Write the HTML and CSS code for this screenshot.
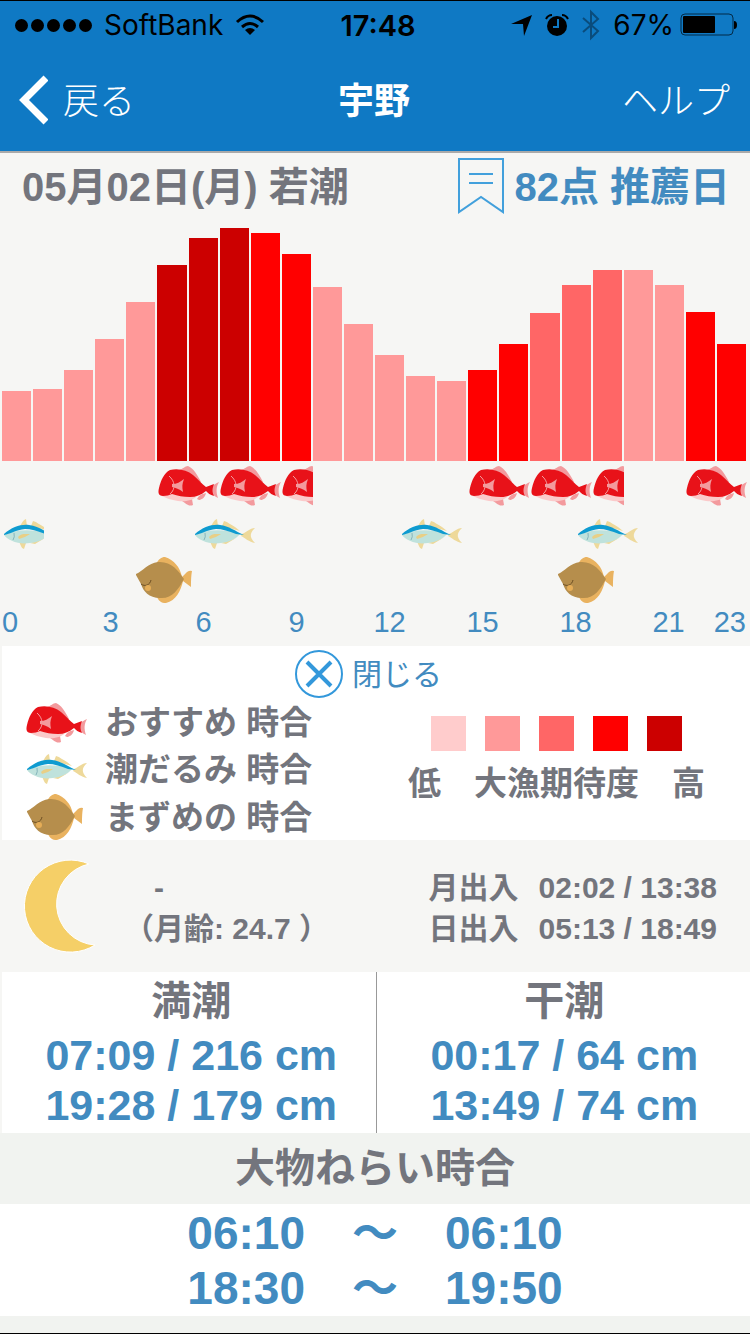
FILE: index.html
```html
<!DOCTYPE html>
<html lang="ja">
<head>
    <meta charset="UTF-8">
    <meta name="viewport" content="width=device-width, initial-scale=1.0">
    <title>宇野</title>
    <link rel="stylesheet" href="styles.css">
</head>
<body>
    <!-- fish drawings, reused by the chart and the legend -->
    <svg class="defs" aria-hidden="true">
        <symbol id="tai" viewBox="0 0 62 42">
            <path fill="#f39a9d" d="M21 5C25 4 27 1 30 1C35 3 39 9 43 17L38 17ZM52 22C56 20 58 18 61 17C58 22 58 27 60 33C56 31 54 29 52 27ZM24 36L34 34L35 40C30 42 28 38 24 36ZM39 34C41 30 44 29 48 28C47 33 43 35 41 35Z"/>
            <path fill="#fbcaca" d="M4 31L14 28L40 30C36 35 29 37 20 36C13 35 8 33 4 31Z"/>
            <path fill="#e81219" d="M5 31C0 31 0 27 1 23C3 15 6 8 12 5C20 3 29 5 35 10C40 14 44 19 48 22L56 19C54 24 54 27 56 31C52 30 50 28 48 26C43 30 38 32 32 32C25 32 20 31 14 29C11 30 9 31 5 31Z"/>
            <path fill="none" stroke="#f39a9d" d="M11 11C17 16 18 24 12 29"/>
            <path fill="#f39a9d" d="M14 19C19 19 22 17 26 14C24 19 24 22 25 27C21 24 18 23 14 22Z"/>
        </symbol>
        <symbol id="buri" viewBox="0 0 62 31">
            <path fill="#eed99a" d="M17 7C19 4 20 1 23 0L24 7ZM28 7L30 2C34 3 37 6 41 8L46 12ZM48 15C51 14 56 9 61 9C57 13 54 17 61 24C55 23 51 19 47 17ZM16 23L23 24L21 30C18 29 18 26 16 23ZM27 24L42 19L32 25Z"/>
            <path fill="#bfe2dc" d="M1 16C12 11 28 9 46 15C42 20 35 23 27 24C16 26 4 21 1 16Z"/>
            <path fill="#0e9bd0" d="M1 15C9 8 18 5 26 6C35 7 41 12 50 16L42 15C35 12 28 10 22 10C13 11 7 15 1 16Z"/>
            <path fill="#e8cf86" d="M15 18C18 14 23 15 27 15C24 17 20 19 16 20Z"/>
            <path fill="none" stroke="#85b4bb" d="M11 14Q12 18 10 21"/>
        </symbol>
        <symbol id="karei" viewBox="0 0 58 48">
            <path fill="#e9b25f" d="M21 8C24 3 26 1 30 1C39 4 45 11 47 21L52 16Q55 14 57 15C56 20 56 27 56 31L48 25C46 34 41 45 31 47C26 47 24 45 22 41Z"/>
            <path fill="#b68e4c" d="M1 18C8 15 13 7 23 6C36 5 43 14 49 23C43 34 37 43 25 42C14 42 8 35 6 28L1 19Z"/>
            <path fill="none" stroke="#6d4e23" d="M6 28C10 31 15 29 16 24"/>
            <ellipse cx="13" cy="32" rx="3" ry="3" fill="#e5ad57"/>
        </symbol>
    </svg>

    <div class="app">
        <div class="statusbar">
            <div class="carrier">
                <span class="signal"><i></i><i></i><i></i><i></i><i></i></span>
                <span>SoftBank</span>
                <svg width="30" height="22" viewBox="0 0 30 22">
                    <path fill="none" stroke="#000" stroke-width="3" d="M2 8Q15 -4 28 8M7 13Q15 6 23 13"/>
                    <path d="M10 16Q15 12 20 16L15 21Z"/>
                </svg>
            </div>
            <div class="clock">17:48</div>
            <div class="indicators">
                <svg width="22" height="22" viewBox="0 0 22 22"><path d="M21 1L13 22L12 10L0 10Z"/></svg>
                <svg class="alarm" width="24" height="24" viewBox="0 0 24 24">
                    <circle cx="12" cy="13" r="10"/>
                    <path fill="none" stroke="#000" stroke-width="2" d="M1 6Q3 2 7 2M17 2Q21 2 23 6"/>
                    <path fill="none" stroke="#0f79c4" stroke-width="2" d="M13 6V14H8"/>
                </svg>
                <svg width="20" height="32" viewBox="0 0 20 32"><path fill="none" stroke="#0a4c7c" stroke-width="2" d="M2 9L17 22L10 29V3L17 10L2 23"/></svg>
                <span class="percent">67%</span>
                <svg width="58" height="24" viewBox="0 0 58 24">
                    <rect x="1" y="1" width="52" height="21" rx="4" fill="none" stroke="#032a47" stroke-width="1"/>
                    <rect x="3" y="3" width="32" height="17" rx="1"/>
                    <path d="M54 8Q57 8 57 12Q57 16 54 16Z"/>
                </svg>
            </div>
        </div>

        <header class="navbar">
            <a class="back" href="#">
                <svg width="30" height="50" viewBox="0 0 30 50"><path fill="none" stroke="#fff" stroke-width="7" d="M28 3L6 25L28 47"/></svg>
                <span>戻る</span>
            </a>
            <h1>宇野</h1>
            <a class="help" href="#">ヘルプ</a>
        </header>

        <main>
            <div class="day">
                <h2>05月02日(月) 若潮</h2>
                <div class="score">
                    <svg width="46" height="58" viewBox="0 0 46 58"><path fill="none" stroke="#42a0dc" stroke-width="2" d="M1 2H45V55L23 40L1 55ZM11 17H35M11 26H35"/></svg>
                    <span>82点 推薦日</span>
                </div>
            </div>

            <div class="chart">
                <div class="bars">
                    <div class="bar lv2" style="height: 70px"></div>
                    <div class="bar lv2" style="height: 72px"></div>
                    <div class="bar lv2" style="height: 91px"></div>
                    <div class="bar lv2" style="height: 122px"></div>
                    <div class="bar lv2" style="height: 159px"></div>
                    <div class="bar lv5" style="height: 196px"></div>
                    <div class="bar lv5" style="height: 223px"></div>
                    <div class="bar lv5" style="height: 233px"></div>
                    <div class="bar lv4" style="height: 228px"></div>
                    <div class="bar lv4" style="height: 207px"></div>
                    <div class="bar lv2" style="height: 174px"></div>
                    <div class="bar lv2" style="height: 137px"></div>
                    <div class="bar lv2" style="height: 106px"></div>
                    <div class="bar lv2" style="height: 85px"></div>
                    <div class="bar lv2" style="height: 80px"></div>
                    <div class="bar lv4" style="height: 91px"></div>
                    <div class="bar lv4" style="height: 117px"></div>
                    <div class="bar lv3" style="height: 148px"></div>
                    <div class="bar lv3" style="height: 176px"></div>
                    <div class="bar lv3" style="height: 191px"></div>
                    <div class="bar lv2" style="height: 191px"></div>
                    <div class="bar lv2" style="height: 176px"></div>
                    <div class="bar lv4" style="height: 149px"></div>
                    <div class="bar lv4" style="height: 117px"></div>
                </div>

                <!-- one grid column = 5 minutes -->
                <div class="lane tai">
                    <div class="run" style="grid-column: 61 / 121">
                        <svg><use href="#tai"/></svg><svg><use href="#tai"/></svg><svg><use href="#tai"/></svg>
                    </div>
                    <div class="run" style="grid-column: 181 / 241">
                        <svg><use href="#tai"/></svg><svg><use href="#tai"/></svg><svg><use href="#tai"/></svg>
                    </div>
                    <div class="run" style="grid-column: 265 / 289">
                        <svg><use href="#tai"/></svg>
                    </div>
                </div>
                <div class="lane buri">
                    <div class="run" style="grid-column: 1 / 17"><svg><use href="#buri"/></svg></div>
                    <div class="run" style="grid-column: 75 / 99"><svg><use href="#buri"/></svg></div>
                    <div class="run" style="grid-column: 155 / 179"><svg><use href="#buri"/></svg></div>
                    <div class="run" style="grid-column: 223 / 247"><svg><use href="#buri"/></svg></div>
                </div>
                <div class="lane karei">
                    <div class="run" style="grid-column: 52 / 76"><svg><use href="#karei"/></svg></div>
                    <div class="run" style="grid-column: 215 / 239"><svg><use href="#karei"/></svg></div>
                </div>

                <div class="axis">
                    <span style="grid-column: 1">0</span>
                    <span style="grid-column: 4">3</span>
                    <span style="grid-column: 7">6</span>
                    <span style="grid-column: 10">9</span>
                    <span style="grid-column: 13">12</span>
                    <span style="grid-column: 16">15</span>
                    <span style="grid-column: 19">18</span>
                    <span style="grid-column: 22">21</span>
                    <span style="grid-column: 24">23</span>
                </div>
            </div>

            <section class="legend">
                <button class="close" type="button">
                    <svg width="48" height="48" viewBox="0 0 48 48">
                        <circle cx="24" cy="24" r="23" fill="none" stroke="#3398db" stroke-width="2"/>
                        <path fill="none" stroke="#3398db" stroke-width="4" d="M12 12L36 36M36 12L12 36"/>
                    </svg>
                    <span>閉じる</span>
                </button>
                <div class="legend-body">
                    <ul class="kinds">
                        <li><svg class="tai"><use href="#tai"/></svg><span>おすすめ 時合</span></li>
                        <li><svg class="buri"><use href="#buri"/></svg><span>潮だるみ 時合</span></li>
                        <li><svg class="karei"><use href="#karei"/></svg><span>まずめの 時合</span></li>
                    </ul>
                    <div class="levels">
                        <div class="swatches">
                            <i class="lv1"></i><i class="lv2"></i><i class="lv3"></i><i class="lv4"></i><i class="lv5"></i>
                        </div>
                        <p>低　大漁期待度　高</p>
                    </div>
                </div>
            </section>

            <section class="moon">
                <svg width="74" height="94" viewBox="0 0 74 94"><path fill="#f5cf67" stroke="#fff" d="M65 5A46 46 0 1 0 71 86A41 41 0 0 1 65 5Z"/></svg>
                <div class="age">
                    <p>-</p>
                    <p>（月齢: 24.7 ）</p>
                </div>
                <dl class="rise">
                    <dt>月出入</dt><dd>02:02 / 13:38</dd>
                    <dt>日出入</dt><dd>05:13 / 18:49</dd>
                </dl>
            </section>

            <section class="tides">
                <div class="tide">
                    <h3>満潮</h3>
                    <p>07:09 / 216 cm</p>
                    <p>19:28 / 179 cm</p>
                </div>
                <div class="tide">
                    <h3>干潮</h3>
                    <p>00:17 / 64 cm</p>
                    <p>13:49 / 74 cm</p>
                </div>
            </section>

            <h3 class="heading">大物ねらい時合</h3>
            <div class="times">
                <p><span>06:10</span><span>〜</span><span>06:10</span></p>
                <p><span>18:30</span><span>〜</span><span>19:50</span></p>
            </div>
        </main>
    </div>
</body>
</html>
```

FILE: styles.css
```css
* {
    margin: 0;
    padding: 0;
    box-sizing: border-box;
}

body {
    font-family: "Liberation Sans", "Noto Sans CJK JP", sans-serif;
    background-color: #f6f6f4;
    color: #73757d;
}

a {
    color: inherit;
    text-decoration: none;
}

svg {
    display: block;
    flex: none;
}

.defs {
    position: absolute;
    width: 0;
    height: 0;
}

.app {
    display: flex;
    flex-direction: column;
    min-height: 100vh;
    border-top: 1px solid #000;
    border-bottom: 1px solid #000;
}

/* status bar */
.statusbar {
    display: grid;
    grid-template-columns: 1fr auto 1fr;
    align-items: center;
    flex: none;
    height: 48px;
    padding: 0 12px 0 15px;
    background-color: #0f79c4;
    color: #000;
    font-family: Inter, sans-serif;
    font-size: 28px;
}

.carrier, .indicators {
    display: flex;
    align-items: center;
    gap: 12px;
}

.indicators {
    justify-content: flex-end;
}

.percent {
    margin-right: -6px;
}

.signal {
    display: flex;
    gap: 3px;
}

.signal i {
    width: 13px;
    height: 13px;
    border-radius: 50%;
    background-color: #000;
}

.clock {
    padding-left: 3px;
    font-size: 29px;
    font-weight: 600;
}

/* navigation bar */
.navbar {
    display: grid;
    grid-template-columns: 1fr auto 1fr;
    align-items: center;
    flex: none;
    height: 104px;
    padding: 0 20px 0 18px;
    background-color: #0f79c4;
    border-bottom: 2px solid #aaa;
    color: #fff;
    font-size: 36px;
    font-weight: 300;
}

.navbar h1 {
    padding-bottom: 4px;
    font-size: 36px;
}

.back {
    display: flex;
    align-items: center;
    gap: 15px;
}

.back span, .help {
    padding-bottom: 4px;
}

.help {
    text-align: right;
}

main {
    flex: 1;
    display: flow-root;
    background-color: #f1f3f0;
}

/* date and score */
.day {
    display: flex;
    justify-content: space-between;
    align-items: center;
    height: 67px;
    padding: 0 20px 2px 22px;
    background-color: #f6f6f4;
}

.day h2, .score {
    font-size: 40px;
    font-weight: 700;
}

.day h2, .score span {
    padding-bottom: 4px;
}

.score {
    display: flex;
    align-items: center;
    gap: 10px;
    color: #428bc0;
}

/* hourly chart */
.chart {
    padding: 8px 4px 0 2px;
    background-color: #f6f6f4;
}

.bars {
    display: grid;
    grid-template-columns: repeat(24, minmax(0, 1fr));
    gap: 2px;
    align-items: end;
    height: 233px;
}

.lv1 { background-color: #ffcccc; }
.lv2 { background-color: #ff9999; }
.lv3 { background-color: #ff6666; }
.lv4 { background-color: #ff0000; }
.lv5 { background-color: #cc0000; }

.lane {
    display: grid;
    grid-template-columns: repeat(288, minmax(0, 1fr));
    align-items: center;
    margin: 0 -2px 0 1px;
}

.lane.tai { height: 50px; }
.lane.buri { height: 46px; }
.lane.karei { height: 46px; }

.run {
    grid-row: 1;
    display: flex;
    overflow: hidden;
}

.tai svg, svg.tai {
    width: 62px;
    height: 42px;
}

.buri svg, svg.buri {
    width: 62px;
    height: 31px;
}

.karei svg, svg.karei {
    width: 58px;
    height: 48px;
}

.axis {
    display: grid;
    grid-template-columns: repeat(24, minmax(0, 1fr));
    justify-items: center;
    align-items: center;
    height: 43px;
    padding-bottom: 5px;
    color: #428bc0;
    font-size: 29px;
}

.axis span:first-child {
    justify-self: start;
}

.axis span:last-child {
    justify-self: end;
}

/* legend */
.legend {
    height: 194px;
    padding-right: 1px;
    border-left: 2px solid #f6f6f4;
    background-color: #fff;
}

.close {
    display: flex;
    align-items: center;
    gap: 9px;
    height: 53px;
    margin: 0 auto;
    padding: 3px 14px 0 0;
    border: none;
    background: none;
    color: #428bc0;
    font-family: inherit;
    font-size: 30px;
    cursor: pointer;
}

.close span {
    padding-bottom: 4px;
}

.legend-body {
    display: flex;
    justify-content: space-between;
    font-size: 33px;
    font-weight: 700;
}

.kinds {
    padding-left: 24px;
    list-style: none;
}

.kinds li {
    display: grid;
    grid-template-columns: 79px auto;
    align-items: center;
    height: 47px;
}

.kinds span {
    line-height: 39px;
}

.levels {
    padding: 17px 44px 0 0;
    text-align: center;
}

.swatches {
    display: flex;
    justify-content: center;
    gap: 19px;
    margin-bottom: 6px;
}

.swatches i {
    width: 35px;
    height: 35px;
}

/* moon and sun */
.moon {
    display: flex;
    align-items: center;
    height: 132px;
    padding: 0 33px 0 24px;
    background-color: #f6f6f4;
    font-size: 30px;
    font-weight: 700;
    line-height: 41px;
}

.age, .rise {
    padding-top: 3px;
}

.age {
    padding-left: 26px;
}

.age p:first-child {
    padding-left: 30px;
}

.rise {
    display: grid;
    grid-template-columns: auto auto;
    column-gap: 20px;
    margin-left: auto;
}

/* high and low tide */
.tides {
    display: grid;
    grid-template-columns: 1fr 1fr;
    height: 161px;
    padding-right: 1px;
    border-left: 2px solid #f6f6f4;
    background-color: #fff;
    text-align: center;
}

.tide {
    padding-left: 5px;
}

.tide + .tide {
    padding-left: 3px;
    border-left: 1px solid #999;
}

.tide h3, .heading {
    font-size: 40px;
}

.tide h3 {
    line-height: 58px;
}

.tide p {
    color: #428bc0;
    font-size: 43px;
    font-weight: 700;
    line-height: 50px;
}

/* time ranges */
.heading {
    line-height: 71px;
    text-align: center;
}

.times {
    padding-top: 2px;
    background-color: #fff;
    color: #428bc0;
    font-size: 46px;
    font-weight: 700;
    line-height: 55px;
}

.times p {
    display: flex;
    justify-content: center;
    gap: 47px;
}
```
